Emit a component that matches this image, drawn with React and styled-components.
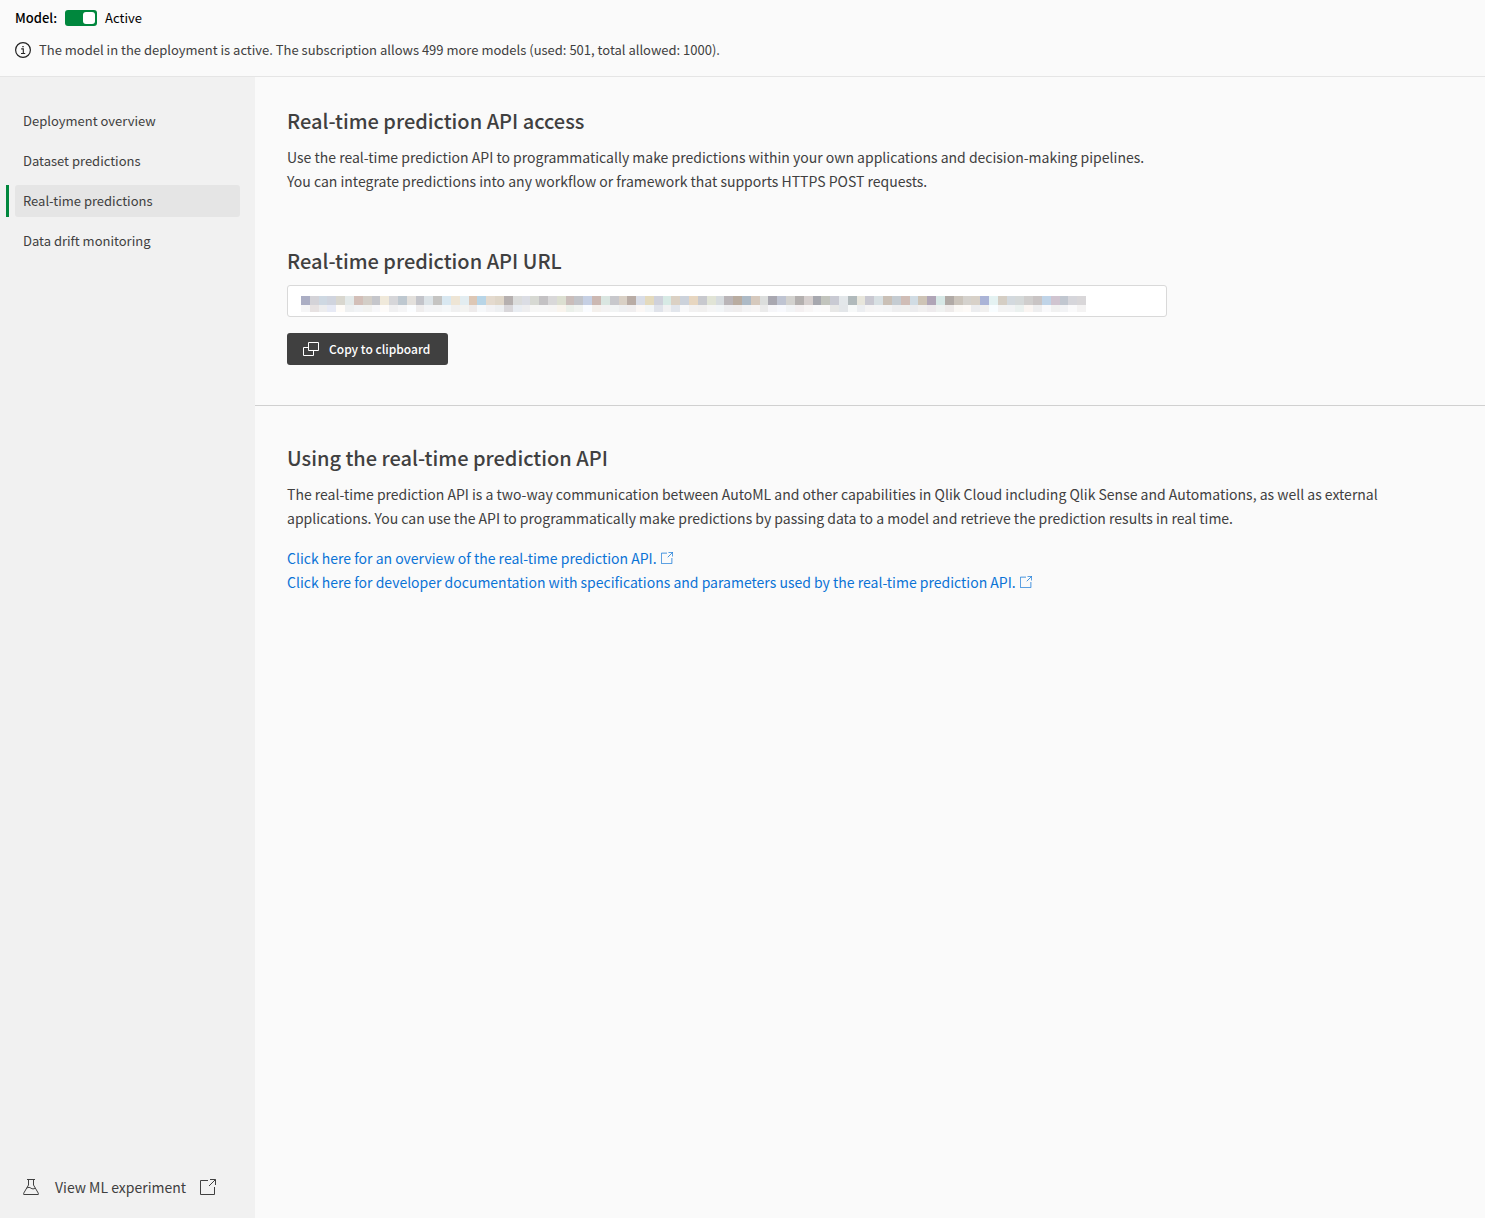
import React, { useState } from "react";
import styled, { createGlobalStyle } from "styled-components";

const Colors = {
  green: "#00873d",
  text: "#404040",
  link: "#0b73d6",
  page: "#fafafa",
  sidebar: "#f1f1f1",
};

const GlobalStyle = createGlobalStyle`
  * {
    box-sizing: border-box;
  }

  body {
    margin: 0;
    background: ${Colors.page};
    color: ${Colors.text};
    font-family: "Noto Sans CJK SC", "Noto Sans", sans-serif;
  }

  h2, p, ul {
    margin: 0;
    padding: 0;
  }
`;

const Page = styled.div`
  display: flex;
  flex-direction: column;
  min-height: 100vh;
`;

const Header = styled.header`
  display: flex;
  flex-direction: column;
  gap: 8px;
  padding: 6px 15px 14px;
  border-bottom: 1px solid #e5e5e5;
  font-size: 13px;
  line-height: 24px;
`;

const StatusRow = styled.div`
  display: flex;
  align-items: center;
  gap: 8px;
  color: #000;

  label {
    font-weight: 500;
  }
`;

const Switch = styled.input`
  appearance: none;
  display: flex;
  justify-content: flex-end;
  width: 32px;
  height: 16px;
  margin: 0;
  padding: 2px;
  border-radius: 3px;
  background: ${Colors.green};
  cursor: pointer;

  &::after {
    content: "";
    width: 12px;
    height: 12px;
    border-radius: 3px;
    background: #fff;
  }

  &:not(:checked) {
    justify-content: flex-start;
    background: #8c8c8c;
  }
`;

const InfoRow = styled.p`
  display: flex;
  align-items: center;
  gap: 8px;

  svg {
    flex: none;
  }
`;

const Body = styled.div`
  display: flex;
  flex: 1;
`;

const Sidebar = styled.aside`
  display: flex;
  flex-direction: column;
  justify-content: space-between;
  flex: none;
  width: 255px;
  padding: 28px 15px 19px 6px;
  background: ${Colors.sidebar};
`;

const NavList = styled.ul`
  display: flex;
  flex-direction: column;
  gap: 8px;
  list-style: none;
`;

const NavItem = styled.li`
  padding-left: 6px;
  border-left: 3px solid ${(p) => (p.$active ? Colors.green : "transparent")};
`;

const NavLink = styled.a`
  display: block;
  padding: 0 8px;
  border-radius: 3px;
  background: ${(p) => (p.$active ? "#e5e5e5" : "transparent")};
  color: ${Colors.text};
  font-size: 13px;
  line-height: 32px;
  text-decoration: none;
`;

const ExperimentLink = styled.a`
  display: flex;
  align-items: center;
  padding-left: 17px;
  color: ${Colors.text};
  font-size: 14px;
  line-height: 24px;
  text-decoration: none;

  span {
    margin: 0 14px 0 16px;
  }
`;

const Main = styled.main`
  flex: 1;
  min-width: 0;
`;

const Section = styled.section`
  padding: ${(p) => (p.$first ? "32px" : "40px")} 32px 40px;

  & + & {
    border-top: 1px solid #d0d0d0;
  }
`;

const Heading = styled.h2`
  font-size: 20px;
  font-weight: 500;
  line-height: 24px;
`;

const Text = styled.p`
  max-width: ${(p) => (p.$narrow ? "880px" : "none")};
  margin-top: 12px;
  font-size: 14px;
  line-height: 24px;
`;

const UrlBlock = styled.div`
  max-width: 880px;
  margin-top: 56px;
`;

const UrlField = styled.div`
  position: relative;
  margin-top: 12px;

  svg {
    position: absolute;
    top: 11px;
    left: 14px;
    pointer-events: none;
  }
`;

const UrlInput = styled.input`
  display: block;
  width: 100%;
  height: 32px;
  padding: 0 14px;
  border: 1px solid #d9d9d9;
  border-radius: 3px;
  background: #fff;
`;

const CopyButton = styled.button`
  display: flex;
  align-items: center;
  gap: 10px;
  height: 32px;
  margin-top: 16px;
  padding: 0 18px 0 16px;
  border: 0;
  border-radius: 3px;
  background: ${Colors.text};
  color: #fff;
  font-family: inherit;
  font-size: 12px;
  font-weight: 500;
  line-height: 24px;
  cursor: pointer;
`;

const DocLinks = styled.div`
  display: flex;
  flex-direction: column;
  align-items: flex-start;
  margin-top: 16px;
`;

const DocLink = styled.a`
  color: ${Colors.link};
  font-size: 14px;
  line-height: 24px;
  text-decoration: none;

  svg {
    margin-left: 4px;
  }
`;

// masked url, one colour per block
const maskTop =
  "abaec4 d4d3d8 ced8e2 d0d4de d9d7cf e3e9e9 d3bfb8 d3cec7 c5c6cb f0e9da d6d6d9 bec8d0 e3e0dc c3c4ca dce3e7 c5c4c2 d9e8f1 eee5d5 e3edf1 ddc7b5 b8d5e7 e4dace dfd6c8 b6b0af dbdcdb dbdde4 d7d9d3 c4c2c4 d9d8d9 dcdfd1 cabdba c2c4c9 c6d0e4 ccb8b2 dae6e1 c8c8cc d9d0c5 b9aca5 d9dde7 e4dabd cfd1db d7eae5 dbd1c4 ccd2db e7d6c0 c8c9ce e1e4d6 d7dcdf bab5b8 b9aca0 adbac6 d6c9bd dcdedd a9a8b1 bfc4d2 d3d2cf b4b0af d6cfce a7a8af c2c4bd c9cad3 e3e7ea b1babc e8e6dc c9c8d1 d8e0e3 cac0b6 c5ccd2 d0bdb6 d1dce4 cec4b6 b0a5b7 d7e8e6 b1aaa6 cbc4bb d5d2cd d8d1c8 abb4d7 e4f2f2 d5cec4 d3d9de d5d9d9 d0cecd c9c4c4 c0d4e8 d0c4d0 c1c7d0 d6d6db d9d7d9".split(" ");

const maskBottom =
  "f5f5f6 e7e2e2 ededee e7eaf5 fffcf8 eef0f1 f1f3f5 f2f2f0 f7f7f9 fdfbf9 f0f0f1 f5f5f6 fbfdff efeded f3f4f6 f3f4f5 f5f7f8 f0f0f0 f3f3f1 eeebeb f6f8fa f2f2f4 edeff1 d9d7da e9edf2 eeeeef f6f6f5 f6f6f6 f6f5f4 f9f4ed ebf0ea f1f3f0 fafcff f4f0ec f3f2f2 f2f4f4 eeeff1 f0eeef fbf7f5 f2f5f7 e0e3ea f1f1f2 e2e6ec f8f8f9 f2f1f1 f1f0ef f5f5f5 f2f5f7 eeeef0 efeded f3f3f4 f6f4f4 ebebeb f6f6f9 f8f9fd f2f4f6 f4f0f1 f8f6f6 fafafb faf9f9 e8e8e7 e3e6e9 f7f9f9 eceef1 f5f4f4 f5f5f6 f3f4f5 eeeeef efefee ececee f1f0f0 eeebed f0f2f1 eeebea faf8f5 fdfaf7 ecedef f1f0ef f8fdff f3f3f3 f2f3f4 ebf1ef faf5f2 eeeeef f9f9fb f1f1f1 f2f3f5 fafafb f4f3f3".split(" ");

function MaskedUrl() {
  const edge = (i) => Math.round((i * 785) / maskTop.length);
  const row = (colors, y, height) =>
    colors.map((c, i) => (
      <rect key={`${y}-${i}`} x={edge(i)} y={y} width={edge(i + 1) - edge(i)} height={height} fill={`#${c}`} />
    ));

  return (
    <svg width="785" height="16" shapeRendering="crispEdges" aria-hidden="true">
      {row(maskTop, 0, 9)}
      {row(maskBottom, 9, 7)}
    </svg>
  );
}

function InfoIcon() {
  return (
    <svg width="16" height="16" viewBox="0 0 16 16" fill="none" stroke="#222" aria-hidden="true">
      <circle cx="8" cy="8" r="7.4" strokeWidth="1.2" />
      <path d="M6.2 6.9H8.3V11.4M6 11.5H10.2" strokeWidth="1.1" />
      <path d="M7.3 4.6H8.7" strokeWidth="1.4" />
    </svg>
  );
}

function CopyIcon() {
  return (
    <svg width="16" height="14" viewBox="0 0 16 14" fill="none" stroke="#fff" aria-hidden="true">
      <path d="M5.5 0.5H15.5V8.5H5.5Z" />
      <path d="M5.5 5.5H0.5V13.5H10.5V8.5" />
    </svg>
  );
}

function FlaskIcon() {
  return (
    <svg width="16" height="16" viewBox="0 0 16 16" fill="none" stroke={Colors.text} aria-hidden="true">
      <path d="M4 0.5H12" />
      <path d="M5.5 0.5V6L0.7 14.2V15.5H15.3V14.2L10.5 6V0.5" />
      <path d="M3.6 9.2C5.6 7.8 6.8 8.4 8 9.2S10.8 10.2 12.2 9.2" />
    </svg>
  );
}

function ExternalIcon({ size = 12 }) {
  return (
    <svg width={size} height={size} viewBox="0 0 16 16" fill="none" stroke="currentColor" aria-hidden="true">
      <path d="M8 1.5H0.5V15.5H14.5V8" />
      <path d="M10 0.5H15.5V6M15.5 0.5L9 7" />
    </svg>
  );
}

const navItems = [
  "Deployment overview",
  "Dataset predictions",
  "Real-time predictions",
  "Data drift monitoring",
];

function App() {
  const [active, setActive] = useState(true);
  const [current, setCurrent] = useState("Real-time predictions");

  return (
    <Page>
      <GlobalStyle />
      <Header>
        <StatusRow>
          <label htmlFor="model">Model:</label>
          <Switch id="model" type="checkbox" role="switch" checked={active} onChange={() => setActive(!active)} />
          <span>Active</span>
        </StatusRow>
        <InfoRow>
          <InfoIcon />
          The model in the deployment is active. The subscription allows 499 more models (used: 501, total allowed: 1000).
        </InfoRow>
      </Header>

      <Body>
        <Sidebar>
          <nav>
            <NavList>
              {navItems.map((item) => (
                <NavItem key={item} $active={item === current}>
                  <NavLink href="#" $active={item === current} onClick={() => setCurrent(item)}>{item}</NavLink>
                </NavItem>
              ))}
            </NavList>
          </nav>
          <ExperimentLink href="#">
            <FlaskIcon />
            <span>View ML experiment</span>
            <ExternalIcon size={16} />
          </ExperimentLink>
        </Sidebar>

        <Main>
          <Section $first>
            <Heading>Real-time prediction API access</Heading>
            <Text $narrow>
              Use the real-time prediction API to programmatically make predictions within your own applications and
              decision-making pipelines. You can integrate predictions into any workflow or framework that supports
              HTTPS POST requests.
            </Text>
            <UrlBlock>
              <Heading id="url-heading">Real-time prediction API URL</Heading>
              <UrlField>
                <UrlInput type="text" readOnly aria-labelledby="url-heading" />
                <MaskedUrl />
              </UrlField>
              <CopyButton type="button">
                <CopyIcon />
                Copy to clipboard
              </CopyButton>
            </UrlBlock>
          </Section>

          <Section>
            <Heading>Using the real-time prediction API</Heading>
            <Text>
              The real-time prediction API is a two-way communication between AutoML and other capabilities in Qlik
              Cloud including Qlik Sense and Automations, as well as external applications. You can use the API to
              programmatically make predictions by passing data to a model and retrieve the prediction results in real
              time.
            </Text>
            <DocLinks>
              <DocLink href="#">
                Click here for an overview of the real-time prediction API.
                <ExternalIcon />
              </DocLink>
              <DocLink href="#">
                Click here for developer documentation with specifications and parameters used by the real-time
                prediction API.
                <ExternalIcon />
              </DocLink>
            </DocLinks>
          </Section>
        </Main>
      </Body>
    </Page>
  );
}

export default App;
